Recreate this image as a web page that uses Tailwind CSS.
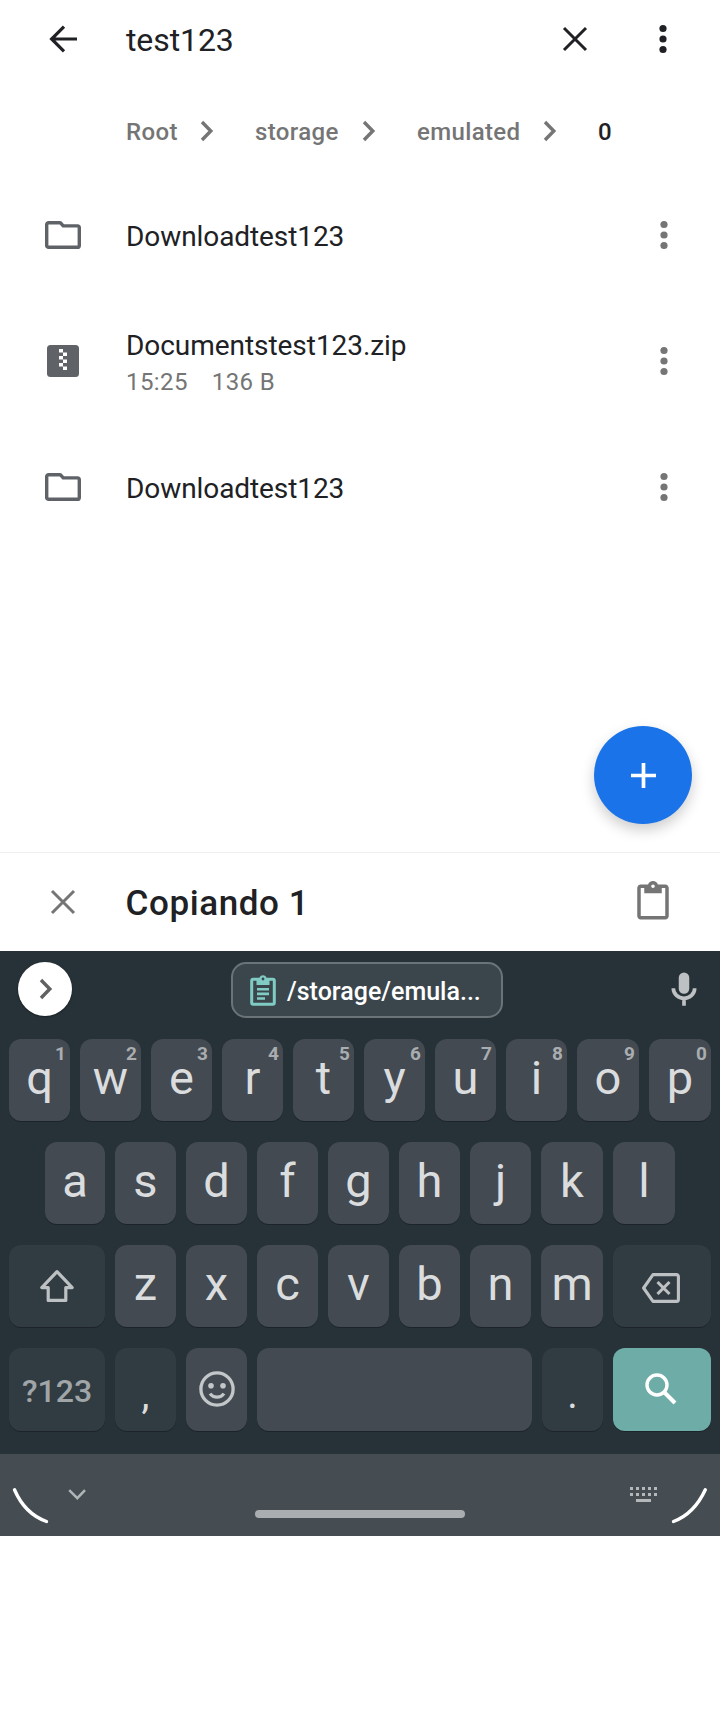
<!DOCTYPE html>
<html lang="es">
<head>
<meta charset="utf-8">
<title>test123</title>
<script src="https://cdn.jsdelivr.net/npm/@tailwindcss/browser@4"></script>
</head>
<body class="bg-white">
<svg class="hidden">
  <symbol id="kebab" viewBox="0 0 12 32"><circle cx="6" cy="5.5" r="3.6"/><circle cx="6" cy="16" r="3.6"/><circle cx="6" cy="26.5" r="3.6"/></symbol>
  <symbol id="folder" viewBox="0 0 36 28"><path d="M3.6 1.7h10.9a2 2 0 0 1 1.5.6L18.2 4.9h14.2a1.9 1.9 0 0 1 1.9 1.9v17.6a1.9 1.9 0 0 1-1.9 1.9H3.6a1.9 1.9 0 0 1-1.9-1.9V3.6a1.9 1.9 0 0 1 1.9-1.9z" fill="none" stroke="currentColor" stroke-width="3.4"/></symbol>
  <symbol id="chev" viewBox="0 0 14 22"><path d="M2 2l8.8 9L2 20" fill="none" stroke="currentColor" stroke-width="3.4"/></symbol>
  <symbol id="cross" viewBox="0 0 26 26"><path d="M2 2l22 22M24 2L2 24" fill="none" stroke="currentColor" stroke-width="3"/></symbol>
</svg>
<div class="w-[720px] h-[1712px] flex flex-col overflow-hidden font-[Roboto,sans-serif] text-[#202124]">
  <header class="h-[90px] pb-3 flex items-center shrink-0">
    <svg class="ml-[49px] w-[29px] h-[28px]" viewBox="0 0 29 28" fill="none" stroke="currentColor" stroke-width="3.2"><path d="M28 14H3M15 1.6L2.6 14L15 26.4"/></svg>
    <h1 class="ml-[48px] pt-0.5 text-[32px] leading-[40px] tracking-[-0.1px]">test123</h1>
    <svg class="ml-auto w-[26px] h-[26px]"><use href="#cross"/></svg>
    <svg class="ml-[69px] mr-[51px] w-[12px] h-[32px] fill-current"><use href="#kebab"/></svg>
  </header>
  <nav class="h-[82px] pb-[1px] pl-[126px] flex items-center shrink-0 text-[24px] leading-[28px] font-medium tracking-[0.35px] text-[#757575]">
    <span class="w-[73.5px] pt-[3px]">Root</span><svg class="w-[14px] h-[22px] mr-[41.5px]"><use href="#chev"/></svg>
    <span class="w-[107px] pt-[3px]">storage</span><svg class="w-[14px] h-[22px] mr-[41px]"><use href="#chev"/></svg>
    <span class="w-[126px] pt-[3px]">emulated</span><svg class="w-[14px] h-[22px] mr-[41px]"><use href="#chev"/></svg>
    <span class="pt-[3px] text-[#202124]">0</span>
  </nav>
  <main class="h-[680px] shrink-0 flex flex-col">
    <div class="h-[126px] flex items-center">
      <svg class="ml-[45px] w-[36px] h-[28px] text-[#5f6368]"><use href="#folder"/></svg>
      <span class="ml-[45px] pt-[3px] text-[28px] tracking-[-0.08px]">Downloadtest123</span>
      <svg class="ml-auto mr-[50px] w-[12px] h-[32px] fill-[#757575]"><use href="#kebab"/></svg>
    </div>
    <div class="h-[126px] flex items-center">
      <svg class="ml-[47px] w-[32px] h-[32px]" viewBox="0 0 32 32"><rect width="32" height="32" rx="3.5" fill="#5f6368"/><path fill="#fff" d="M12 4h4v3.5h-4zM16 7.5h4V11h-4zM12 11h4v3.5h-4zM16 14.5h4V18h-4zM12 18h4v3.5h-4zM16 21.5h4V25h-4z"/></svg>
      <div class="ml-[47px] pt-[6px] flex flex-col">
        <span class="text-[28px] leading-[36px] tracking-[-0.05px]">Documentstest123.zip</span>
        <span class="flex gap-[24px] text-[24px] leading-[36px] tracking-[0.4px] text-[#757575]"><span>15:25</span><span>136 B</span></span>
      </div>
      <svg class="ml-auto mr-[50px] w-[12px] h-[32px] fill-[#757575]"><use href="#kebab"/></svg>
    </div>
    <div class="h-[126px] flex items-center">
      <svg class="ml-[45px] w-[36px] h-[28px] text-[#5f6368]"><use href="#folder"/></svg>
      <span class="ml-[45px] pt-[3px] text-[28px] tracking-[-0.08px]">Downloadtest123</span>
      <svg class="ml-auto mr-[50px] w-[12px] h-[32px] fill-[#757575]"><use href="#kebab"/></svg>
    </div>
    <button class="mt-auto mb-[28px] mr-[28px] self-end size-[98px] rounded-full bg-[#1a73e8] flex items-center justify-center shadow-[0_6px_14px_rgba(0,0,0,0.2)]">
      <svg class="size-[25px]" viewBox="0 0 25 25" stroke="#fff" stroke-width="3.7"><path d="M12.5 0v25M0 12.5h25"/></svg>
    </button>
  </main>
  <section class="h-[99px] shrink-0 flex items-center border-t border-[#eeeeee] bg-white">
    <svg class="ml-[50px] w-[26px] h-[26px] text-[#757575]"><use href="#cross"/></svg>
    <h2 class="ml-[49.5px] pt-[3px] text-[35px] leading-[40px] font-medium tracking-[0.6px]">Copiando 1</h2>
    <svg class="ml-auto mr-[46px] size-[42px]" viewBox="0 0 24 24" fill="#757575"><path d="M19 2h-4.18C14.4.84 13.3 0 12 0c-1.3 0-2.4.84-2.82 2H5c-1.1 0-2 .9-2 2v16c0 1.1.9 2 2 2h14c1.1 0 2-.9 2-2V4c0-1.1-.9-2-2-2zm-7 0c.55 0 1 .45 1 1s-.45 1-1 1-1-.45-1-1 .45-1 1-1zm7 18H5V4h2v3h10V4h2v16z"/></svg>
  </section>
  <section class="h-[585px] shrink-0 bg-[#273238] flex flex-col text-[#dadcde]">
    <div class="h-[88px] pt-[11px] flex items-start shrink-0">
      <button class="ml-[18px] size-[54px] rounded-full bg-white text-[#616161] flex items-center justify-center shadow-[0_1px_2px_rgba(0,0,0,0.4)]"><svg class="ml-[1px] w-[14px] h-[22px]"><use href="#chev"/></svg></button>
      <div class="ml-[159px] w-[272px] h-[56px] rounded-[15px] border-2 border-[#6a7478] bg-[#3b464c] flex items-center text-white">
        <svg class="ml-[17px] w-[26px] h-[31px]" viewBox="0 0 26 31"><rect x="1.7" y="4.2" width="22.6" height="25" rx="1.5" fill="none" stroke="#80cbc4" stroke-width="3"/><path fill="#80cbc4" d="M6.5 3h3a3.6 3.6 0 0 1 7 0h3v7h-13zM7 13h12v2.6H7zM7 17.6h12v2.6H7zM7 22.2h8v2.6H7z"/><circle cx="13" cy="4" r="1.4" fill="#3b464c"/></svg>
        <span class="ml-[11px] pt-[4px] text-[25px] font-medium">/storage/emula...</span>
      </div>
      <svg class="ml-[160px] mt-[7px] size-[42px]" viewBox="0 0 24 24"><rect x="9" y="2" width="6" height="12.2" rx="3" fill="#bdc1c3"/><path d="M5.9 11a6.1 5.8 0 0 0 12.2 0M12 16.8V21" fill="none" stroke="#bdc1c3" stroke-width="2.1"/></svg>
    </div>
    <div id="row1" class="h-[82px] mb-[21px] pl-[9px] grid grid-cols-[repeat(8,61px)_62px_62px] gap-[10px]"></div>
    <div id="row2" class="h-[82px] mb-[21px] pl-[45px] grid grid-cols-[60px_repeat(6,61px)_62px_62px] gap-[10px]"></div>
    <div class="h-[82px] mb-[21px] pl-[9px] grid grid-cols-[96px_repeat(6,61px)_62px_98px] gap-[10px]">
      <div class="rounded-[12px] bg-[#313c42] shadow-[0_1px_0_#1c2429] flex items-center justify-center"><svg class="w-[36px] h-[34px]" viewBox="0 0 36 34" fill="none" stroke="#bdc1c3" stroke-width="3.2" stroke-linejoin="round"><path d="M18 2.6L2.8 18.6H9.2V31.4H26.8V18.6H33.2z"/></svg></div>
      <div id="row3" class="contents"></div>
      <div class="rounded-[12px] bg-[#313c42] shadow-[0_1px_0_#1c2429] flex items-center justify-center"><svg class="mt-[3px] mr-[2px] w-[38px] h-[30px]" viewBox="0 0 38 30" fill="none" stroke="#bdc1c3" stroke-width="3.1" stroke-linejoin="round"><path d="M11 1.6H34.4a2 2 0 0 1 2 2V26.4a2 2 0 0 1-2 2H11L1.6 15z"/><path d="M15.5 9l12 12M27.5 9l-12 12"/></svg></div>
    </div>
    <div class="h-[83px] mb-[23px] pl-[9px] grid grid-cols-[96px_61px_61px_275px_61px_98px] gap-[10px]">
      <div class="rounded-[12px] bg-[#313c42] shadow-[0_1px_0_#1c2429] flex items-center justify-center pt-[3px] text-[32px] font-medium text-[#a0a5a8]">?123</div>
      <div class="rounded-[12px] bg-[#313c42] shadow-[0_1px_0_#1c2429] flex items-center justify-center pt-[10px] text-[40px]">,</div>
      <div class="rounded-[12px] bg-[#434a51] shadow-[0_1px_0_#1c2429] flex items-center justify-center pb-[2px]"><svg class="size-[36px]" viewBox="0 0 36 36" fill="none" stroke="#c3c7c9" stroke-width="3.3"><circle cx="18" cy="18" r="16.1"/><circle cx="12" cy="14.7" r="2.8" fill="#c3c7c9" stroke="none"/><circle cx="24" cy="14.7" r="2.8" fill="#c3c7c9" stroke="none"/><path d="M11 22.6q2.6 3.6 7 3.6t7-3.6"/></svg></div>
      <div class="rounded-[12px] bg-[#434a51] shadow-[0_1px_0_#1c2429]"></div>
      <div class="rounded-[12px] bg-[#313c42] shadow-[0_1px_0_#1c2429] flex items-center justify-center pt-[11px] text-[40px]">.</div>
      <div class="rounded-[12px] bg-[#6eaca8] shadow-[0_1px_0_#1c2429] flex items-center justify-center"><svg class="mb-[2px] mr-[2px] w-[32px] h-[32px]" viewBox="0 0 32 32" fill="none" stroke="#fff"><circle cx="12" cy="12" r="10" stroke-width="3.4"/><path d="M19.5 19.5L30 30" stroke-width="4"/></svg></div>
    </div>
    <div class="h-[82px] bg-[#454d52] flex items-start shrink-0">
      <svg class="ml-[11px] mt-[33px] w-[38px] h-[38px]" viewBox="0 0 38 38" fill="none" stroke="#fff" stroke-width="3.4" stroke-linecap="round"><path d="M3.5 2.8Q14 27 35.5 34.5"/></svg>
      <svg class="ml-[19px] mt-[35px] w-[18px] h-[12px]" viewBox="0 0 18 12" fill="none" stroke="#b0b5b7" stroke-width="2.5"><path d="M1.2 1.2L9.3 9.2L17 1.2"/></svg>
      <div class="ml-[169px] mt-[56px] w-[210px] h-[8px] rounded-full bg-[#a9adb0]"></div>
      <svg class="ml-[165px] mt-[33px] w-[27px] h-[15px]" viewBox="0 0 27 15" fill="#b4b8ba"><path d="M0 0h3v3H0zM6 0h3v3H6zM12 0h3v3h-3zM18 0h3v3h-3zM24 0h3v3h-3zM0 6h3v3H0zM6 6h3v3H6zM12 6h3v3h-3zM18 6h3v3h-3zM24 6h3v3h-3zM6 12h15v3H6z"/></svg>
      <svg class="ml-[13px] mt-[33px] w-[38px] h-[38px]" viewBox="0 0 38 38" fill="none" stroke="#fff" stroke-width="3.4" stroke-linecap="round"><path d="M35.3 2.8Q24 27 3.5 34.5"/></svg>
    </div>
  </section>
</div>
<script>
const key = (c, hint) => `<div class="relative rounded-[12px] bg-[#434a51] shadow-[0_1px_0_#1c2429] flex items-center justify-center pb-[4px] text-[47px] leading-[56px]">${c}${hint ? `<span class="absolute right-[4px] top-[4px] text-[19px] leading-[22px] font-bold text-[#a9adb0]">${hint}</span>` : ''}</div>`;
row1.innerHTML = [...'qwertyuiop'].map((c, i) => key(c, String((i + 1) % 10))).join('');
row2.innerHTML = [...'asdfghjkl'].map(c => key(c)).join('');
row3.innerHTML = [...'zxcvbnm'].map(c => key(c)).join('');
</script>
</body>
</html>
